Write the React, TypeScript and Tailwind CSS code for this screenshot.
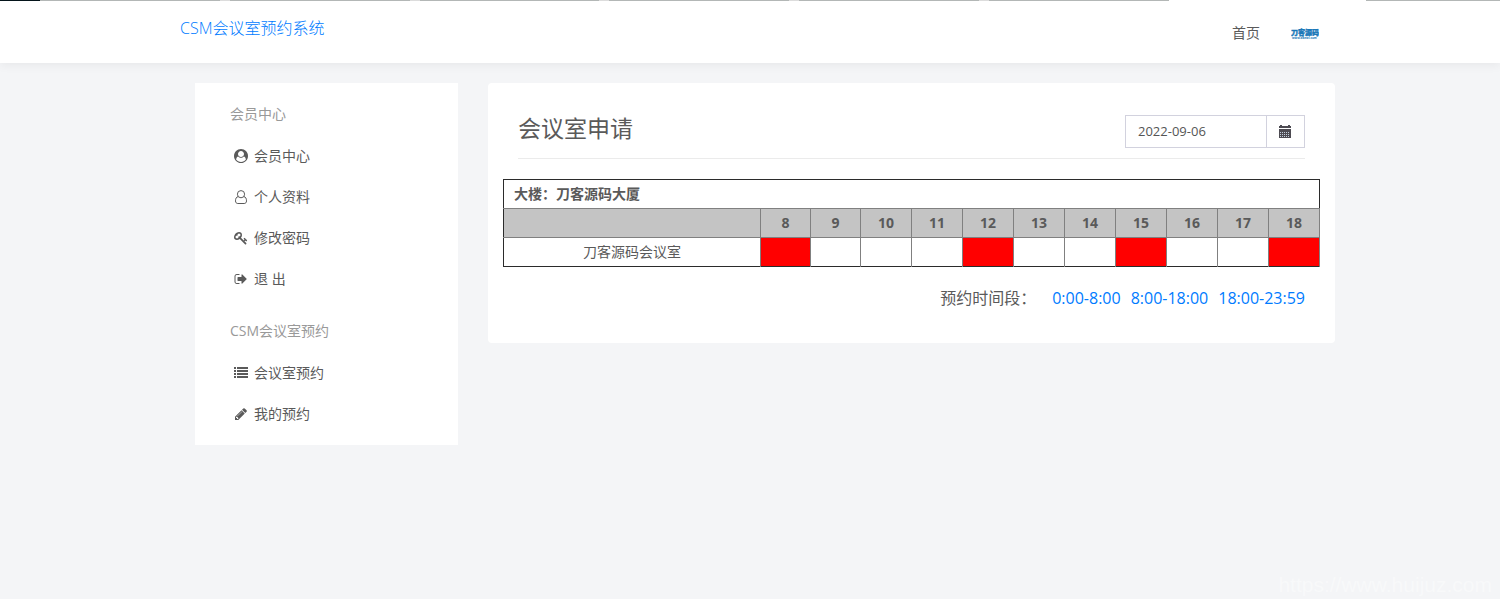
import type { ReactNode } from "react";

function Glyph({ d }: { d: string }) {
  return (
    <svg viewBox="0 0 1792 1792" className="h-3.5 w-3.5 fill-current">
      <path d={d} />
    </svg>
  );
}

const icons = {
  userCircle: (
    <Glyph d="M1523 1339q-22-155-87.5-257.5t-184.5-118.5q-67 74-159.5 115.5t-195.5 41.5-195.5-41.5-159.5-115.5q-119 16-184.5 118.5t-87.5 257.5q106 150 271 237.5t356 87.5 356-87.5 271-237.5zm-243-699q0-159-112.5-271.5t-271.5-112.5-271.5 112.5-112.5 271.5 112.5 271.5 271.5 112.5 271.5-112.5 112.5-271.5zm512 256q0 182-71 347.5t-190.5 286-285.5 191.5-349 71q-182 0-348-71t-286-191-191-286-71-348 71-348 191-286 286-191 348-71 348 71 286 191 191 286 71 348z" />
  ),
  user: (
    <svg viewBox="0 0 14 14" className="h-3.5 w-3.5 fill-none stroke-current">
      <circle cx="7" cy="4.2" r="3.6" />
      <path d="M4.2 6.6C2.3 6.8 1.5 8.7 1.5 10.900c0 1.600.9 2.600 2.300 2.600h6.400c1.400 0 2.300-1 2.300-2.600 0-2.200-.8-4.100-2.700-4.300" />
    </svg>
  ),
  key: (
    <Glyph d="M832 512q0-80-56-136t-136-56-136 56-56 136q0 42 19 83-41-19-83-19-80 0-136 56t-56 136 56 136 136 56 136-56 56-136q0-42-19-83 41 19 83 19 80 0 136-56t56-136zm851 704q0 17-49 66t-66 49q-9 0-28.5-16t-36.5-33-38.5-40-24.5-26l-96 96 220 220q28 28 28 68 0 42-39 81t-81 39q-40 0-68-28l-671-671q-176 131-365 131-163 0-265.5-102.5t-102.5-265.5q0-160 95-313t248-248 313-95q163 0 265.5 102.5t102.5 265.5q0 189-131 365l355 355 96-96q-3-3-26-24.5t-40-38.5-33-36.5-16-28.5q0-17 49-66t66-49q13 0 23 10 6 6 46 44.5t82 79.5 86.5 86 73 78 28.5 41z" />
  ),
  signOut: (
    <Glyph d="M704 1440q0 4 1 20t.5 26.5-3 23.5-10 19.5-20.5 6.5h-320q-119 0-203.5-84.5t-84.5-203.5v-704q0-119 84.5-203.5t203.5-84.5h320q13 0 22.5 9.5t9.5 22.5q0 4 1 20t.5 26.5-3 23.5-10 19.5-20.5 6.5h-320q-66 0-113 47t-47 113v704q0 66 47 113t113 47h312l11.5 1 11.5 3 8 5.5 7 9 2 13.5zm928-544q0 26-19 45l-544 544q-19 19-45 19t-45-19-19-45v-288h-448q-26 0-45-19t-19-45v-384q0-26 19-45t45-19h448v-288q0-26 19-45t45-19 45 19l544 544q19 19 19 45z" />
  ),
  list: (
    <svg viewBox="0 0 14 14" className="h-3.5 w-3.5 fill-current">
      <path d="M0 1h2v2H0zM3 1h11v2H3zM0 4h2v2H0zM3 4h11v2H3zM0 7h2v2H0zM3 7h11v2H3zM0 10h2v2H0zM3 10h11v2H3z" />
    </svg>
  ),
  pencil: (
    <Glyph d="M491 1536l91-91-235-235-91 91v107h128v128h107zm523-928q0-22-22-22-10 0-17 7l-542 542q-7 7-7 17 0 22 22 22 10 0 17-7l542-542q7-7 7-17zm-54-192l416 416-832 832h-416v-416zm683 96q0 53-37 90l-166 166-416-416 166-165q36-38 90-38 53 0 91 38l235 234q37 39 37 91z" />
  ),
};

const menu: { title: string; items: { label: string; icon: ReactNode }[] }[] = [
  {
    title: "会员中心",
    items: [
      { label: "会员中心", icon: icons.userCircle },
      { label: "个人资料", icon: icons.user },
      { label: "修改密码", icon: icons.key },
      { label: "退 出", icon: icons.signOut },
    ],
  },
  {
    title: "CSM会议室预约",
    items: [
      { label: "会议室预约", icon: icons.list },
      { label: "我的预约", icon: icons.pencil },
    ],
  },
];

const hours = [8, 9, 10, 11, 12, 13, 14, 15, 16, 17, 18];
const booked = [8, 12, 15, 18];
const periods = ["0:00-8:00", "8:00-18:00", "18:00-23:59"];

function TopStrip() {
  return (
    <div className="flex h-px w-full">
      <div className="w-10 bg-[#04141a]" />
      <div className="flex flex-1 gap-2.5 bg-[#dcdcdc]">
        {[0, 1, 2, 3, 4, 5].map((tab) => (
          <div key={tab} className="flex-1 bg-[#b3b7b6]" />
        ))}
      </div>
      <div className="w-[197px] bg-white" />
      <div className="w-[134px] bg-[#b3b7b6]" />
    </div>
  );
}

function Logo() {
  return (
    <svg
      viewBox="0 0 28 28"
      className="h-7 w-7 fill-[#1a78b8]"
      role="img"
      aria-label="刀客源码"
    >
      <text
        x="0"
        y="16"
        fontSize="7"
        fontWeight="900"
        className="stroke-[#1a78b8] [stroke-width:0.4px]"
      >
        刀客源码
      </text>
      <text x="1" y="20" fontSize="3" fontWeight="700">
        www.dkewl.com
      </text>
    </svg>
  );
}

function Header() {
  return (
    <header className="bg-white shadow-[0_2px_10px_rgba(0,0,0,0.06)]">
      <TopStrip />
      <div className="mx-auto flex h-[62px] max-w-[1170px] items-start justify-between px-[15px]">
        <a href="#" className="pt-[15px] text-base leading-6 font-light text-[#007bff]">
          CSM会议室预约系统
        </a>
        <nav className="flex h-16 items-center gap-[31px] pr-px">
          <a href="#">首页</a>
          <a href="#">
            <Logo />
          </a>
        </nav>
      </div>
    </header>
  );
}

function Sidebar() {
  return (
    <aside className="self-start bg-white pt-2.5">
      {menu.map((group) => (
        <div key={group.title} className="pb-[11px] pl-[35px]">
          <h2 className="flex h-[42px] items-center text-[#999]">{group.title}</h2>
          <ul>
            {group.items.map((item) => (
              <li key={item.label}>
                <a href="#" className="flex h-[41px] items-center gap-1">
                  <span className="flex w-5 justify-end pr-0.5">{item.icon}</span>
                  {item.label}
                </a>
              </li>
            ))}
          </ul>
        </div>
      ))}
    </aside>
  );
}

function DatePicker() {
  return (
    <div className="flex h-[33px] w-[180px] border border-[#d2d2de]">
      <input
        type="text"
        aria-label="日期"
        defaultValue="2022-09-06"
        className="min-w-0 flex-1 px-3 text-[13px] text-[#555] outline-none"
      />
      <button
        type="button"
        aria-label="选择日期"
        className="flex w-[38px] items-center justify-center border-l border-[#d2d2de] pr-px text-[#4d4b52]"
      >
        <svg viewBox="0 0 12 13" className="h-[13px] w-3">
          <path
            fill="currentColor"
            d="M0 1h1V0h2v1h6V0h2v1h1v2H0zM0 4h12v9H0z"
          />
          <path
            fill="#c3cfdc"
            d="M1 7h1v1H1zM3 7h1v1H3zM5 7h1v1H5zM7 7h1v1H7zM9 7h1v1H9zM1 9h1v1H1zM3 9h1v1H3zM5 9h1v1H5zM7 9h1v1H7zM9 9h1v1H9zM1 11h1v1H1zM3 11h1v1H3zM5 11h1v1H5zM7 11h1v1H7zM9 11h1v1H9z"
          />
        </svg>
      </button>
    </div>
  );
}

function Schedule() {
  return (
    <table className="w-full table-fixed border-collapse border border-[#2b2b2b] text-center leading-5">
      <colgroup>
        <col />
        {hours.map((hour) => (
          <col key={hour} className={hour < 10 ? "w-[50px]" : "w-[51px]"} />
        ))}
      </colgroup>
      <thead>
        <tr className="h-[29px]">
          <th colSpan={12} className="px-2.5 text-left font-bold">
            大楼：刀客源码大厦
          </th>
        </tr>
        <tr className="h-[29px] bg-[#c4c4c4]">
          <td className="border-y border-r border-[#808080]" />
          {hours.map((hour) => (
            <th key={hour} className="border border-[#808080] font-bold">
              {hour}
            </th>
          ))}
        </tr>
      </thead>
      <tbody>
        <tr className="h-[29px]">
          <td className="border-r border-[#808080]">刀客源码会议室</td>
          {hours.map((hour) => (
            <td
              key={hour}
              className={
                booked.includes(hour)
                  ? "border-x border-[#808080] bg-[#f00]"
                  : "border-x border-[#808080]"
              }
            />
          ))}
        </tr>
      </tbody>
    </table>
  );
}

export default function App() {
  return (
    <div className="relative min-h-screen bg-[#f4f5f7] font-['Open_Sans','Noto_Sans_CJK_SC',sans-serif] text-sm text-[#5a5a5a]">
      <Header />
      <div className="mx-auto max-w-[1170px] px-[15px] pt-5">
        <div className="-mr-[15px] grid grid-cols-[263px_1fr] gap-[30px] pl-[15px]">
          <Sidebar />
          <main className="self-start rounded-sm bg-white px-[15px] pb-[33px]">
            <div className="mx-[15px] mb-5 flex h-[76px] items-end justify-between border-b border-[#ebebeb] pb-2.5">
              <h1 className="text-[23px] leading-10">会议室申请</h1>
              <DatePicker />
            </div>
            <Schedule />
            <div className="mr-[15px] mt-[19px] flex justify-end gap-2.5 text-base leading-6">
              <span className="mr-1.5">预约时间段：</span>
              {periods.map((period) => (
                <a key={period} href="#" className="text-[#007bff]">
                  {period}
                </a>
              ))}
            </div>
          </main>
        </div>
      </div>
      <div className="absolute right-2 bottom-0.5 font-['Liberation_Sans',sans-serif] text-[21px] leading-6 text-[#f8f9fa]">
        https://www.huijuz.com
      </div>
    </div>
  );
}
